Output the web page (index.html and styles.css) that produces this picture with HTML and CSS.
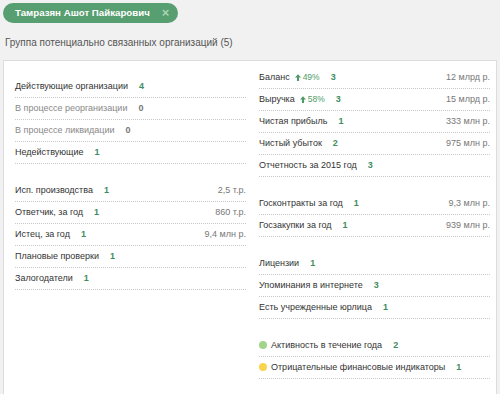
FILE: index.html
```html
<!DOCTYPE html>
<html lang="ru">
<head>
    <meta charset="UTF-8">
    <meta name="viewport" content="width=device-width, initial-scale=1.0">
    <title>Связанные организации</title>
    <link rel="stylesheet" href="styles.css">
</head>
<body>

    <div class="page">
        <div class="chip">
            <span class="chip-name">Тамразян Ашот Пайкарович</span>
            <span class="chip-close">&times;</span>
        </div>

        <h2 class="title">Группа потенциально связанных организаций (5)</h2>

        <div class="card">
            <div class="col col-left">
                <div class="group">
                    <div class="row"><span class="label">Действующие организации</span><span class="count">4</span></div>
                    <div class="row muted"><span class="label">В процессе реорганизации</span><span class="count">0</span></div>
                    <div class="row muted"><span class="label">В процессе ликвидации</span><span class="count">0</span></div>
                    <div class="row"><span class="label">Недействующие</span><span class="count">1</span></div>
                </div>
                <div class="group">
                    <div class="row"><span class="label">Исп. производства</span><span class="count">1</span><span class="value">2,5 т.р.</span></div>
                    <div class="row"><span class="label">Ответчик, за год</span><span class="count">1</span><span class="value">860 т.р.</span></div>
                    <div class="row"><span class="label">Истец, за год</span><span class="count">1</span><span class="value">9,4 млн р.</span></div>
                    <div class="row"><span class="label">Плановые проверки</span><span class="count">1</span></div>
                    <div class="row"><span class="label">Залогодатели</span><span class="count">1</span></div>
                </div>
            </div>

            <div class="col col-right">
                <div class="group">
                    <div class="row">
                        <span class="label">Баланс</span>
                        <span class="trend"><svg class="arrow" viewBox="0 0 8 9"><path d="M4 0 L8 4.5 H5.4 V9 H2.6 V4.5 H0 Z"/></svg>49%</span>
                        <span class="count">3</span><span class="value">12 млрд р.</span>
                    </div>
                    <div class="row">
                        <span class="label">Выручка</span>
                        <span class="trend"><svg class="arrow" viewBox="0 0 8 9"><path d="M4 0 L8 4.5 H5.4 V9 H2.6 V4.5 H0 Z"/></svg>58%</span>
                        <span class="count">3</span><span class="value">15 млрд р.</span>
                    </div>
                    <div class="row"><span class="label">Чистая прибыль</span><span class="count">1</span><span class="value">333 млн р.</span></div>
                    <div class="row"><span class="label">Чистый убыток</span><span class="count">2</span><span class="value">975 млн р.</span></div>
                    <div class="row"><span class="label">Отчетность за 2015 год</span><span class="count">3</span></div>
                </div>
                <div class="group">
                    <div class="row"><span class="label">Госконтракты за год</span><span class="count">1</span><span class="value">9,3 млн р.</span></div>
                    <div class="row"><span class="label">Госзакупки за год</span><span class="count">1</span><span class="value">939 млн р.</span></div>
                </div>
                <div class="group">
                    <div class="row"><span class="label">Лицензии</span><span class="count">1</span></div>
                    <div class="row"><span class="label">Упоминания в интернете</span><span class="count">3</span></div>
                    <div class="row"><span class="label">Есть учрежденные юрлица</span><span class="count">1</span></div>
                </div>
                <div class="group">
                    <div class="row"><span class="dot dot-green"></span><span class="label">Активность в течение года</span><span class="count">2</span></div>
                    <div class="row"><span class="dot dot-yellow"></span><span class="label">Отрицательные финансовые индикаторы</span><span class="count">1</span></div>
                </div>
            </div>
        </div>
    </div>

</body>
</html>
```

FILE: styles.css
```css
body {
    font-family: "Liberation Sans", Arial, sans-serif;
    margin: 0;
    background-color: #f1f1f1;
    color: #333;
    overflow: hidden;
}
.page {
    padding: 2px 3px 0 3px;
}
.chip {
    display: inline-flex;
    align-items: center;
    height: 20px;
    padding: 0 9px 0 12px;
    background-color: #579e70;
    border-radius: 10px;
    color: white;
    font-size: 9.7px;
    font-weight: bold;
}
.chip-close {
    margin-left: 12px;
    color: #a9d2b6;
    font-size: 13px;
    font-weight: bold;
}
.title {
    margin: 14px 0 12px 2px;
    font-size: 10px;
    font-weight: normal;
    color: #555;
}
.card {
    display: flex;
    gap: 13px;
    padding: 6px 6px 20px 11px;
    background-color: white;
    border: 1px solid #ddd;
    min-height: 330px;
}
.col {
    flex: 1;
}
.col-left {
    padding-top: 9px;
}
.group {
    margin-bottom: 16px;
}
.row {
    display: flex;
    align-items: center;
    height: 21px;
    border-bottom: 1px dotted #c8c8c8;
    font-size: 9px;
}
.row.muted .label {
    color: #888;
}
.count {
    margin-left: 11px;
    font-weight: bold;
    color: #3f8c5f;
}
.row.muted .count {
    color: #777;
}
.trend {
    display: inline-flex;
    align-items: center;
    margin-left: 5px;
    font-size: 8.5px;
    color: #4f9a68;
}
.arrow {
    width: 6px;
    height: 7px;
    margin-right: 2px;
    fill: #4f9a68;
}
.value {
    margin-left: auto;
    color: #777;
}
.dot {
    width: 8px;
    height: 8px;
    border-radius: 50%;
    margin-right: 4px;
}
.dot-green {
    background-color: #a2d48b;
}
.dot-yellow {
    background-color: #f8d44f;
}
```
